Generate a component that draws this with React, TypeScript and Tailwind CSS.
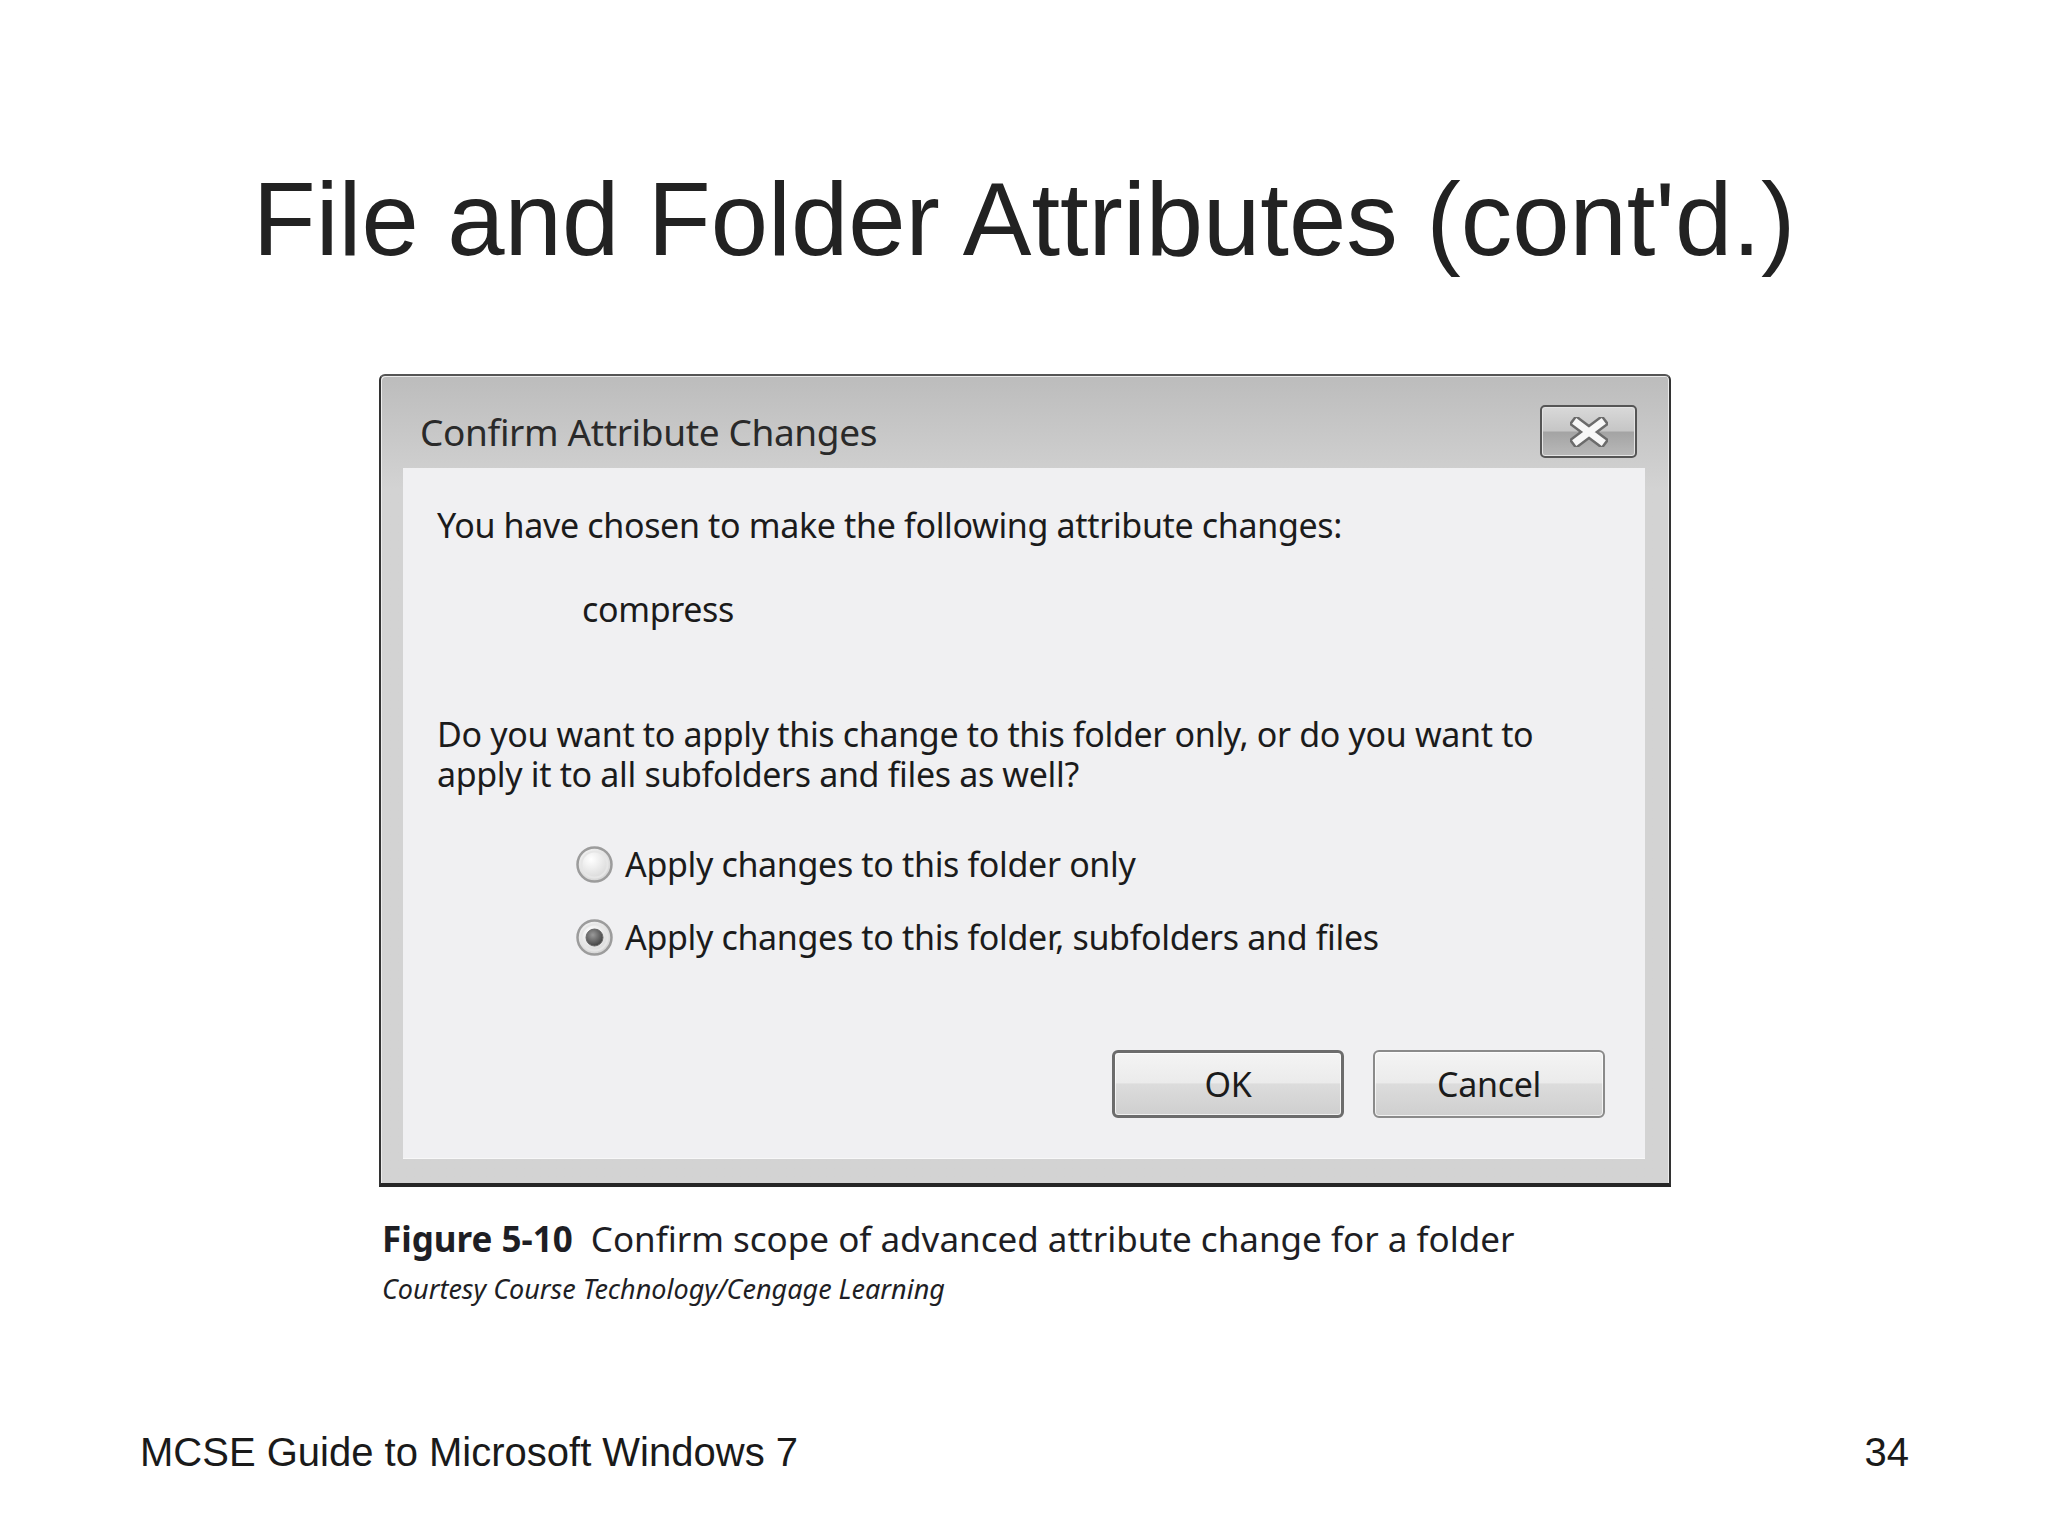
import React from 'react'

// 체크/언체크 라디오 (Win7 스타일)
function Radio({ checked }: { checked?: boolean }) {
  return (
    <svg width="37" height="37" viewBox="0 0 37 37" className="shrink-0">
      <defs>
        <radialGradient id="rb-face" cx="40%" cy="35%" r="70%">
          <stop offset="0%" stopColor="#ffffff" />
          <stop offset="100%" stopColor="#d2d2d2" />
        </radialGradient>
        <radialGradient id="rb-dot" cx="40%" cy="35%" r="70%">
          <stop offset="0%" stopColor="#9a9a9a" />
          <stop offset="100%" stopColor="#3e3e3e" />
        </radialGradient>
      </defs>
      <circle cx="18.5" cy="18.5" r="17" fill="url(#rb-face)" stroke="#9c9c9c" strokeWidth="2.5" />
      <circle cx="18.5" cy="18.5" r="13" fill="none" stroke="#e6e6e6" strokeWidth="2" />
      {checked && <circle cx="18.5" cy="18.5" r="8.5" fill="url(#rb-dot)" stroke="#6a6a6a" strokeWidth="1" />}
    </svg>
  )
}

function WinButton({ label, isDefault }: { label: string; isDefault?: boolean }) {
  return (
    <button
      type="button"
      className={`w-[232px] h-[68px] rounded-[6px] flex items-center justify-center text-[34px] leading-none text-[#1b1b1b] bg-[linear-gradient(to_bottom,#f4f4f4_0%,#ebebeb_48%,#dcdcdc_50%,#cfcfcf_100%)] shadow-[inset_0_0_0_1px_rgba(255,255,255,0.7)] ${
        isDefault ? 'border-[3px] border-[#6c6c6c]' : 'border-2 border-[#8a8a8a]'
      }`}
      style={{ fontFamily: '"Noto Sans", sans-serif' }}
    >
      {label}
    </button>
  )
}

function CloseButton() {
  return (
    <div className="w-[97px] h-[53px] rounded-[5px] border-2 border-[#555] bg-[linear-gradient(to_bottom,#d9d9d9_0%,#c6c6c6_48%,#a4a4a4_52%,#b9b9b9_100%)] shadow-[inset_0_0_0_1px_#e4e4e4] flex items-center justify-center">
      <svg width="38" height="30" viewBox="0 0 38 30">
        <path d="M7 6 L31 24 M31 6 L7 24" stroke="#6b6b6b" strokeWidth="12" strokeLinecap="square" />
        <path d="M7 6 L31 24 M31 6 L7 24" stroke="#f7f7f7" strokeWidth="7" strokeLinecap="square" />
      </svg>
    </div>
  )
}

function ConfirmDialog() {
  return (
    <div
      className="w-[1292px] h-[813px] flex flex-col border-x-2 border-t-2 border-b-4 border-x-[#333] border-t-[#555] border-b-[#262626] rounded-t-[6px] bg-linear-to-b from-[#bcbcbc] to-[#d3d3d3] to-[14%] shadow-[inset_1px_1px_0_#ececec,inset_-1px_0_0_#ececec]"
      style={{ fontFamily: '"Noto Sans", sans-serif' }}
    >
      {/* 타이틀 바 */}
      <div className="h-[92px] flex justify-between items-start pl-[39px] pr-[32px]">
        <div className="mt-[36px] text-[37px] leading-[40px] tracking-[-0.01em] text-[#2a2a2a]">Confirm Attribute Changes</div>
        <div className="mt-[29px]">
          <CloseButton />
        </div>
      </div>

      {/* 본문 */}
      <div className="flex-1 ml-[22px] mr-[24px] mb-[25px] bg-[#f0f0f2] flex flex-col pt-[37px] pl-[34px] pr-[40px] pb-[40px] text-[34px] leading-[40px] tracking-[-0.01em] text-[#1b1b1b] shadow-[0_1px_0_#f8f8f8]">
        <p>You have chosen to make the following attribute changes:</p>
        <p className="mt-[44px] ml-[145px]">compress</p>
        <div className="mt-[85px]">
          <p>Do you want to apply this change to this folder only, or do you want to</p>
          <p>apply it to all subfolders and files as well?</p>
        </div>
        <div className="mt-[50px] ml-[139px] flex flex-col gap-[33px]">
          <label className="flex items-center gap-[12px] h-[40px]">
            <Radio />
            <span>Apply changes to this folder only</span>
          </label>
          <label className="flex items-center gap-[12px] h-[40px]">
            <Radio checked />
            <span>Apply changes to this folder, subfolders and files</span>
          </label>
        </div>
        <div className="mt-auto flex justify-end gap-[29px]">
          <WinButton label="OK" isDefault />
          <WinButton label="Cancel" />
        </div>
      </div>
    </div>
  )
}

export default function App() {
  return (
    <div className="w-[2048px] h-[1536px] bg-white flex flex-col">
      <h1
        className="mt-[168px] text-center text-[103px] leading-none text-[#222]"
        style={{ fontFamily: '"Liberation Sans", Arial, sans-serif' }}
      >
        File and Folder Attributes (cont'd.)
      </h1>

      <div className="mt-[103px] ml-[379px]">
        <ConfirmDialog />
      </div>

      <div className="ml-[382px]" style={{ fontFamily: '"Noto Sans", sans-serif' }}>
        <p className="mt-[32px] text-[35px] leading-[40px] text-[#1e1e24]">
          <span className="font-bold">Figure 5-10</span>
          <span className="ml-[18px]">Confirm scope of advanced attribute change for a folder</span>
        </p>
        <p className="mt-[14px] text-[27px] leading-[32px] italic text-[#1e1e24]">
          Courtesy Course Technology/Cengage Learning
        </p>
      </div>

      <div
        className="mt-auto mb-[64px] pl-[140px] pr-[139px] flex justify-between text-[40px] leading-none text-[#1a1a1a]"
        style={{ fontFamily: '"Liberation Sans", Arial, sans-serif' }}
      >
        <span>MCSE Guide to Microsoft Windows 7</span>
        <span>34</span>
      </div>
    </div>
  )
}
